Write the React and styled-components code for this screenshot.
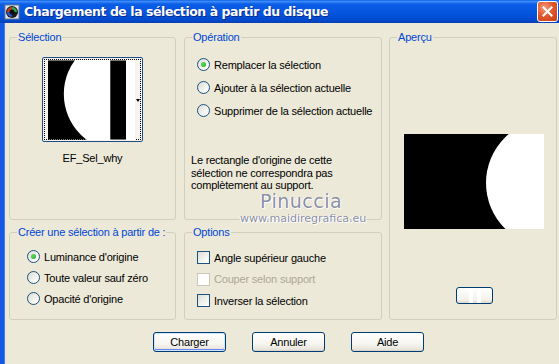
import styled, { createGlobalStyle } from "styled-components";

const Global = createGlobalStyle`
  html, body { margin: 0; padding: 0; background: #ece9d8; }
  body {
    font-family: "Liberation Sans", Arial, sans-serif;
    font-size: 11px;
    letter-spacing: -0.2px;
    color: #000;
  }
`;

const Window = styled.div`
  position: relative;
  width: 559px;
  height: 364px;
  display: flex;
  flex-direction: column;
  background: #ece9d8;
  overflow: hidden;
`;

const TitleBar = styled.div`
  height: 23px;
  flex: none;
  display: flex;
  align-items: center;
  gap: 4px;
  padding: 0 1px 0 4px;
  background: linear-gradient(#0a5fe8 0%, #3d8cf7 6%, #0b5ce6 18%, #0454de 60%, #0249cc 88%, #0a3fb4 100%);
`;

const Title = styled.div`
  flex: 1;
  color: #fff;
  font-family: "DejaVu Sans", "Liberation Sans", sans-serif;
  font-weight: bold;
  font-size: 12.5px;
  letter-spacing: -0.45px;
  text-shadow: 1px 1px 0 #0a2a8a;
  white-space: nowrap;
`;

const CloseButton = styled.div`
  width: 21px;
  height: 21px;
  box-sizing: border-box;
  border: 1px solid #fff;
  border-radius: 3px;
  background: radial-gradient(circle at 35% 30%, #f39a7c 0%, #e2592f 45%, #c53d13 100%);
  display: flex;
  align-items: center;
  justify-content: center;
`;

const Body = styled.div`
  flex: 1;
  border-left: 4px solid #1658e4;
  box-shadow: inset 1px 0 0 #3f7ef2;
  padding: 8px 3px 0 5px;
  display: flex;
  flex-direction: column;
`;

const Groups = styled.div`
  display: grid;
  grid-template-columns: 167px 198px 167px;
  grid-template-rows: 189px 94px;
  column-gap: 8px;
  row-gap: 6px;
`;

const Group = styled.fieldset`
  margin: 0;
  padding: 0;
  min-width: 0;
  border: 1px solid #d0d0bf;
  border-radius: 3px;
  display: flex;
  flex-direction: column;
  align-items: ${(p) => p.$align || "stretch"};
  grid-column: ${(p) => p.$col};
  grid-row: ${(p) => p.$row};
  margin-left: ${(p) => p.$shift || 0}px;
`;

const Legend = styled.legend`
  margin-left: 7px;
  padding: 0 1px;
  line-height: 13px;
  color: #0046d5;
  white-space: nowrap;
`;

const Thumb = styled.div`
  width: 101px;
  height: 85px;
  box-sizing: border-box;
  margin: 13px auto 0;
  border: 1px solid #1f4c86;
  border-radius: 2px;
  padding: 1px;
  background: #f4f3ee;
`;

const Focus = styled.div`
  height: 100%;
  box-sizing: border-box;
  border: 1px dotted #000;
  display: flex;
  align-items: center;
  padding-left: 3px;
`;

const DropArrow = styled.div`
  width: 0;
  height: 0;
  margin-left: 1px;
  margin-top: 2px;
  border-left: 2.5px solid transparent;
  border-right: 2.5px solid transparent;
  border-top: 3px solid #000;
`;

const ThumbLabel = styled.div`
  margin-top: 10px;
  text-align: center;
  line-height: 13px;
`;

const OptionList = styled.div`
  display: flex;
  flex-direction: column;
  gap: ${(p) => p.$gap}px;
  margin-top: ${(p) => p.$top}px;
  padding-left: ${(p) => p.$left}px;
`;

const Row = styled.label`
  display: flex;
  align-items: center;
  height: 13px;
  gap: 4px;
  white-space: nowrap;
  color: ${(p) => (p.$disabled ? "#aca899" : "#000")};
`;

const Radio = styled.span`
  width: 13px;
  height: 13px;
  box-sizing: border-box;
  border-radius: 50%;
  border: 1px solid #1c5180;
  background: linear-gradient(135deg, #dcdcd7 0%, #f4f4f0 60%, #ffffff 100%);
  display: flex;
  align-items: center;
  justify-content: center;
  flex: none;
  &::after {
    content: "";
    width: 5px;
    height: 5px;
    border-radius: 50%;
    background: ${(p) => (p.$checked ? "radial-gradient(circle at 40% 40%, #5ede5e, #21a121)" : "transparent")};
  }
`;

const Check = styled.span`
  width: 13px;
  height: 13px;
  box-sizing: border-box;
  flex: none;
  border: 1px solid ${(p) => (p.$disabled ? "#cac8bb" : "#1c5180")};
  background: ${(p) => (p.$disabled ? "#fff" : "linear-gradient(135deg, #dcdcd7 0%, #f4f4f0 60%, #ffffff 100%)")};
`;

const Note = styled.p`
  margin: 37px 0 0 6px;
  line-height: 12.5px;
  white-space: nowrap;
`;

const Preview = styled.div`
  margin-top: 90px;
  margin-left: 2px;
  width: 140px;
  height: 95px;
  background: #000;
  overflow: hidden;
`;

const SmallButton = styled.div`
  margin-top: 58px;
  margin-left: 3px;
  width: 37px;
  height: 17px;
  box-sizing: border-box;
  border: 1px solid #003c74;
  border-radius: 3px;
  background:
    linear-gradient(90deg, transparent 12px, rgba(255,255,255,0.9) 12px, rgba(255,255,255,0.9) 16px, transparent 16px, transparent 20px, rgba(255,255,255,0.9) 20px, rgba(255,255,255,0.9) 24px, transparent 24px),
    linear-gradient(#ffffff, #f2f1ea 80%, #dcd8cc);
`;

const ButtonRow = styled.div`
  display: flex;
  gap: 26px;
  padding-left: 144px;
  margin-top: 12px;
`;

const Button = styled.div`
  width: 73px;
  height: 20px;
  box-sizing: border-box;
  border: 1px solid #003c74;
  border-radius: 3px;
  background: linear-gradient(#ffffff 0%, #f6f5f0 60%, #e8e5dc 90%, #d6d0c5 100%);
  box-shadow: ${(p) => (p.$default ? "inset 0 0 0 1px #cee7ff, inset 0 -1px 0 1px #6982ee" : "none")};
  display: flex;
  align-items: center;
  justify-content: center;
`;

const Watermark = styled.div`
  position: absolute;
  left: 240px;
  top: 191px;
  width: 122px;
  text-align: center;
  color: #8c90a6;
  text-shadow: 1px 1px 0 #fff, -1px 0 0 #fff;
  pointer-events: none;
  letter-spacing: 0;
`;

const WatermarkName = styled.div`
  font-family: "DejaVu Sans", sans-serif;
  font-size: 19px;
  line-height: 21px;
  letter-spacing: 0.5px;
`;

const WatermarkUrl = styled.div`
  font-family: "DejaVu Sans", sans-serif;
  font-size: 11px;
  line-height: 13px;
`;

const AppIcon = () => (
  <svg width="16" height="16" viewBox="0 0 16 16">
    <rect x="1" y="1" width="14" height="14" fill="#dfe6f0" stroke="#6c7a90" />
    <circle cx="8" cy="8" r="6" fill="#1a1a1a" />
    <path d="M8 3 A5 5 0 0 1 13 8 L8 8 Z" fill="#2fa84a" />
    <path d="M3 8 A5 5 0 0 1 8 3 L8 8 Z" fill="#c63a2a" />
    <path d="M8 13 A5 5 0 0 1 3 8 L8 8 Z" fill="#2e56c8" />
    <circle cx="8" cy="8" r="2.5" fill="#0f0f0f" />
  </svg>
);

const CloseX = () => (
  <svg width="11" height="11" viewBox="0 0 11 11">
    <path d="M1.5 1.5 L9.5 9.5 M9.5 1.5 L1.5 9.5" stroke="#fff" strokeWidth="2" strokeLinecap="square" />
  </svg>
);

const SelectionImage = () => (
  <svg width="88" height="80" viewBox="0 0 88 80">
    <rect width="88" height="80" fill="#000" />
    <circle cx="74" cy="34" r="58" fill="#fff" />
    <rect x="63" y="0" width="16" height="80" fill="#000" />
    <rect x="79" y="0" width="9" height="80" fill="#fff" />
  </svg>
);

const PreviewImage = () => (
  <svg width="140" height="95" viewBox="0 0 140 95">
    <rect width="140" height="95" fill="#000" />
    <circle cx="146" cy="49" r="64" fill="#fff" />
  </svg>
);

const operations = [
  { label: "Remplacer la sélection", checked: true },
  { label: "Ajouter à la sélection actuelle" },
  { label: "Supprimer de la sélection actuelle" },
];

const sources = [
  { label: "Luminance d'origine", checked: true },
  { label: "Toute valeur sauf zéro" },
  { label: "Opacité d'origine" },
];

const options = [
  { label: "Angle supérieur gauche" },
  { label: "Couper selon support", disabled: true },
  { label: "Inverser la sélection" },
];

export default function App() {
  return (
    <>
      <Global />
      <Window>
        <TitleBar>
          <AppIcon />
          <Title>Chargement de la sélection à partir du disque</Title>
          <CloseButton>
            <CloseX />
          </CloseButton>
        </TitleBar>
        <Body>
          <Groups>
            <Group $col="1" $row="1">
              <Legend>Sélection</Legend>
              <Thumb>
                <Focus>
                  <SelectionImage />
                  <DropArrow />
                </Focus>
              </Thumb>
              <ThumbLabel>EF_Sel_why</ThumbLabel>
            </Group>

            <Group $col="2" $row="1">
              <Legend>Opération</Legend>
              <OptionList $top={14} $gap={10} $left={12}>
                {operations.map((o) => (
                  <Row key={o.label}>
                    <Radio $checked={o.checked} />
                    {o.label}
                  </Row>
                ))}
              </OptionList>
              <Note>
                Le rectangle d'origine de cette
                <br />
                sélection ne correspondra pas
                <br />
                complètement au support.
              </Note>
            </Group>

            <Group $col="3" $row="1 / span 2" $align="center" $shift={-1}>
              <Legend>Aperçu</Legend>
              <Preview>
                <PreviewImage />
              </Preview>
              <SmallButton />
            </Group>

            <Group $col="1" $row="2">
              <Legend>Créer une sélection à partir de :</Legend>
              <OptionList $top={11} $gap={8} $left={17}>
                {sources.map((o) => (
                  <Row key={o.label}>
                    <Radio $checked={o.checked} />
                    {o.label}
                  </Row>
                ))}
              </OptionList>
            </Group>

            <Group $col="2" $row="2">
              <Legend>Options</Legend>
              <OptionList $top={12} $gap={8.5} $left={12}>
                {options.map((o) => (
                  <Row key={o.label} $disabled={o.disabled}>
                    <Check $disabled={o.disabled} />
                    {o.label}
                  </Row>
                ))}
              </OptionList>
            </Group>
          </Groups>

          <ButtonRow>
            <Button $default>Charger</Button>
            <Button>Annuler</Button>
            <Button>Aide</Button>
          </ButtonRow>
        </Body>

        <Watermark>
          <WatermarkName>Pinuccia</WatermarkName>
          <WatermarkUrl>www.maidiregrafica.eu</WatermarkUrl>
        </Watermark>
      </Window>
    </>
  );
}
